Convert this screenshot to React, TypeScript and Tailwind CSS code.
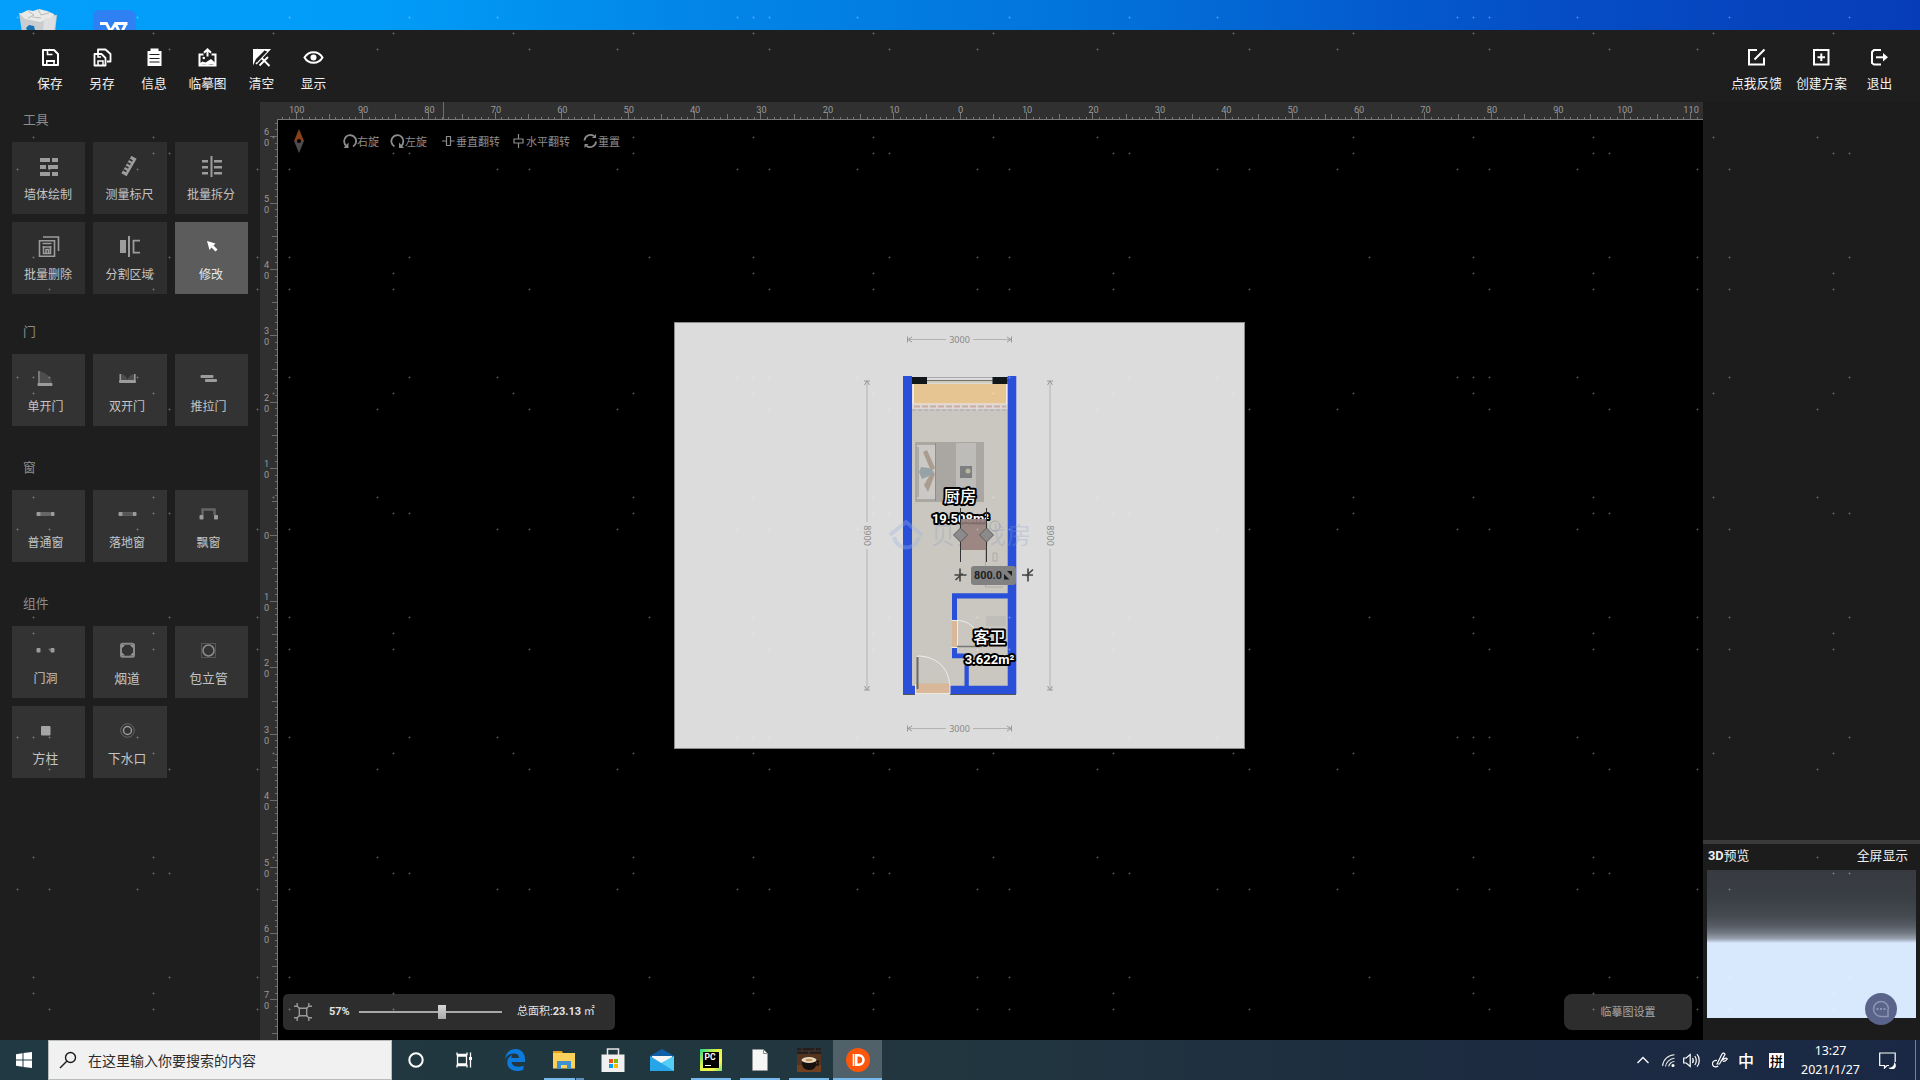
import type { ReactNode } from "react";

const CJK = 'font-["Noto_Sans_CJK_SC","Noto_Sans",sans-serif]';

/* ---------- watermark ---------- */
const DOTS: [number, number][] = [
  [17, 17], [33, 17], [49, 17], [137, 17], [289, 17], [409, 17], [497, 17],
  [33, 33], [153, 33], [273, 33], [393, 33], [513, 33], [633, 33],
  [49, 49], [169, 49], [257, 49], [377, 49], [529, 49], [617, 49],
  [33, 137], [153, 137], [273, 137], [377, 137], [633, 137],
  [153, 153], [169, 153], [393, 153], [409, 153], [633, 153],
  [17, 169], [49, 169], [137, 169], [257, 169], [289, 169], [497, 169], [529, 169], [617, 169],
  [33, 257], [169, 257], [257, 257], [289, 257], [409, 257], [649, 257],
  [33, 273], [153, 273], [393, 273],
  [49, 289], [153, 289], [257, 289], [289, 289], [393, 289], [529, 289],
];

function Watermark() {
  return (
    <svg className="pointer-events-none absolute inset-0" width="1920" height="1040">
      <defs>
        <pattern id="wm" width="720" height="360" patternUnits="userSpaceOnUse">
          {DOTS.map(([x, y]) => (
            <path key={`${x}-${y}`} d={`M${x - 1} ${y + 0.5}h3M${x + 0.5} ${y - 1}v3`} stroke="#fff" strokeOpacity=".16" />
          ))}
        </pattern>
      </defs>
      <rect width="1920" height="1040" fill="url(#wm)" />
    </svg>
  );
}

/* ---------- desktop strip ---------- */
function Desktop() {
  return (
    <div className="flex h-[30px] w-full shrink-0 items-end bg-[linear-gradient(90deg,#039ffb_0%,#019cf7_20%,#0287e8_35%,#0275dc_55%,#054fc6_80%,#073cb8_100%)]">
      <svg width="160" height="30" viewBox="0 0 160 30">
        <path d="M19 13L57 15L55 32H22Z" fill="#c9cdd0" />
        <path d="M20 14l8-4 5 1 6-2 8 2 7 3-1 3-13 5-15-3z" fill="#e9e9e7" />
        <path d="M28 11l6 4-6 3M38 9l3 6 8-2M32 17l9 1" stroke="#b8bbbd" fill="none" />
        <path d="M44 19l12-3-2 16H43z" fill="#dedfe0" />
        <path d="M26 28l3-3 5 1 1 4h-8z" fill="#1673b4" />
        <rect x="93" y="10" width="42.500" height="30" rx="6" fill="#2f80f3" />
        <path d="M100 23.500h6.500l4 8 5-8h12M115.500 24l4 8M126 23.500l-4 8" stroke="#fff" strokeWidth="2.800" fill="none" />
      </svg>
    </div>
  );
}

/* ---------- top toolbar ---------- */
const topIcons: Record<string, ReactNode> = {
  save: (
    <>
      <path d="M2 2h11l4 4v11H2z" fill="none" stroke="#fff" strokeWidth="2" strokeLinejoin="round" />
      <path d="M6.500 2v4.500h5" fill="none" stroke="#fff" strokeWidth="1.600" />
      <path d="M5 12h9v2H5zM5 12h1.500v5H5z" fill="#fff" />
      <path d="M13 12v5" stroke="#fff" strokeWidth="1.600" />
    </>
  ),
  copy: (
    <>
      <path d="M1.500 6h7l4 4v7.500h-11z" fill="none" stroke="#fff" strokeWidth="1.800" strokeLinejoin="round" />
      <path d="M5 5V1.500h7.500L17.500 6v7.500H14" fill="none" stroke="#fff" strokeWidth="1.800" strokeLinejoin="round" />
      <path d="M5 17v-4h5v4M5 6.500v2.500h3" fill="none" stroke="#fff" strokeWidth="1.500" />
    </>
  ),
  info: (
    <>
      <path d="M5.500 .5h8v3h-8zM2.500 3h14v15h-14z" fill="#fff" />
      <path d="M4.500 6.500h10M4.500 10.500h10M4.500 14h10" stroke="#1e1e1e" strokeWidth="1.200" />
    </>
  ),
  trace: (
    <>
      <path d="M5.500 6.500H1.500v11h16v-11h-4" fill="none" stroke="#fff" strokeWidth="2" />
      <path d="M1.500 17.500v-2l3-2 3 1 5.500-3.500 4.500 4v2.500l-4-1.500-4 1-4-.5z" fill="#fff" />
      <circle cx="5.800" cy="10" r="1.300" fill="#fff" />
      <path d="M9.500 8.500V2M6 4.800l3.500-3.500L13 4.800" fill="none" stroke="#fff" strokeWidth="2" />
    </>
  ),
  clear: (
    <>
      <path d="M1 17.500V1h13L4 11z" fill="#fff" />
      <path d="M13 2h4L4 16" fill="none" stroke="#fff" strokeWidth="1.800" />
      <path d="M9.500 10l8 8M16 9l-8.500 8.500" stroke="#fff" strokeWidth="1.900" />
      <path d="M4.500 14L14.500 3.500" stroke="#1e1e1e" strokeWidth="1.100" />
    </>
  ),
  eye: (
    <>
      <path d="M.5 9.500C4.500 2.500 14.500 2.500 18.500 9.500C14.500 16.500 4.500 16.500 .5 9.500z" fill="none" stroke="#fff" strokeWidth="2" />
      <circle cx="9.500" cy="9.500" r="3" fill="#fff" />
    </>
  ),
  feedback: <path d="M10 2H2v14.500h15V9.500M7.500 11.500L17.500 1.500" fill="none" stroke="#fff" strokeWidth="2" />,
  create: <path d="M2 2h14.500v14.500H2zM9.300 5.500v7.500M5.500 9.300h7.500" fill="none" stroke="#fff" strokeWidth="2" />,
  exit: (
    <>
      <path d="M11 2H4L2 4v11l2 1.500h7" fill="none" stroke="#fff" strokeWidth="2" />
      <path d="M6 9.300h8" stroke="#fff" strokeWidth="2" />
      <path d="M13 5l5 4.300-5 4.200z" fill="#fff" />
    </>
  ),
};

function TopItem({ icon, label, width }: { icon: string; label: string; width: number }) {
  return (
    <div className="flex flex-col items-center" style={{ width }}>
      <svg width="19" height="19" viewBox="0 0 19 19" className="overflow-visible">{topIcons[icon]}</svg>
      <span className="mt-[6px] text-[12.700px] leading-[19px] whitespace-nowrap text-[#f2f2f2]">{label}</span>
    </div>
  );
}

function TopBar() {
  return (
    <div className="flex h-[72px] shrink-0 justify-between bg-[#1e1e1e] pt-[18px] pr-[15px] pl-[24px]">
      <div className="flex">
        <TopItem icon="save" label="保存" width={52} />
        <TopItem icon="copy" label="另存" width={52} />
        <TopItem icon="info" label="信息" width={52} />
        <TopItem icon="trace" label="临摹图" width={55} />
        <TopItem icon="clear" label="清空" width={53} />
        <TopItem icon="eye" label="显示" width={51} />
      </div>
      <div className="flex">
        <TopItem icon="feedback" label="点我反馈" width={65} />
        <TopItem icon="create" label="创建方案" width={65} />
        <TopItem icon="exit" label="退出" width={51} />
      </div>
    </div>
  );
}

/* ---------- left palette ---------- */
const G = "#9c9c9c";
const toolIcons: Record<string, ReactNode> = {
  wall: <path d="M3 2h10v4H3zM15 2h6v4h-6zM3 9h6v4H3zM11 9h10v4H11zM3 16h10v4H3zM15 16h6v4h-6z" fill={G} />,
  ruler: (
    <g transform="rotate(30 11 10)">
      <path d="M8 0h6v20H8z" fill={G} />
      <path d="M8 4h3.500M8 8h3.500M8 12h3.500M8 16h3.500" stroke="#2e2e2e" strokeWidth="1.600" />
    </g>
  ),
  split: <path d="M10.500 0h2v21h-2zM2 4h6v2.500H2zM2 10h6v2.500H2zM2 16h6v2.500H2zM14 4h8v2.500h-8zM14 10h8v2.500h-8zM14 16h8v2.500h-8z" fill={G} />,
  del: (
    <g fill="none" stroke={G} strokeWidth="1.600">
      <path d="M6 1h15.500v14M2.500 4.700h15v15.500h-15zM5.500 7.500h9M5.500 11h9M6.500 10v7.500h7V10M9 17v-3.500h2.500V17" />
    </g>
  ),
  area: (
    <>
      <path d="M2 4h6v13H2zM10 0h2v21h-2z" fill={G} />
      <path d="M22 4.700h-6.500v12H22" fill="none" stroke={G} strokeWidth="1.800" />
    </>
  ),
  cursor: <path d="M7 5l8.500 2.500-2 2 4 4-2 2-4-4-2 2.500z" fill="#fff" />,
  door1: (
    <>
      <path d="M4 1C12 2 17 7 18 13H4z" fill="#4d4d4d" />
      <path d="M4 1h2v12H4z" fill="#777" />
      <rect x="3.500" y="13" width="15" height="3" rx="1" fill={G} />
    </>
  ),
  door2: (
    <>
      <path d="M4 4c4 0 7 3 7.500 6C12 7 15 4 19 4v6H4z" fill="#4d4d4d" />
      <path d="M3.500 4h1.600v6H3.500zM18 4h1.600v6H18z" fill={G} />
      <rect x="3" y="10" width="17" height="3" rx="1" fill={G} />
    </>
  ),
  slide: (
    <>
      <rect x="3.500" y="5" width="13" height="3" rx="1" fill={G} />
      <rect x="8" y="9" width="12" height="3" rx="1" fill={G} />
    </>
  ),
  win: (
    <>
      <path d="M6 6h10v4H6z" fill="#666" />
      <rect x="2.500" y="6" width="4" height="4" rx="1" fill={G} />
      <rect x="16.500" y="6" width="4" height="4" rx="1" fill={G} />
    </>
  ),
  floorwin: (
    <>
      <path d="M6 6.500h10M6 9.500h10" stroke="#5c5c5c" />
      <path d="M6 8h10" stroke="#777" />
      <rect x="2.500" y="6" width="4" height="4" rx="1" fill={G} />
      <rect x="16.500" y="6" width="4" height="4" rx="1" fill={G} />
    </>
  ),
  bay: (
    <>
      <path d="M5.500 9V3.500h12V9" fill="none" stroke="#666" strokeWidth="2.500" />
      <rect x="2.500" y="9" width="4" height="4.500" rx="1" fill={G} />
      <rect x="17" y="9" width="4" height="4.500" rx="1" fill={G} />
    </>
  ),
  hole: (
    <>
      <rect x="2.500" y="6" width="4" height="4.500" rx="1" fill={G} />
      <rect x="16.500" y="6" width="4" height="4.500" rx="1" fill={G} />
    </>
  ),
  flue: (
    <>
      <rect x="5" y="1.700" width="13" height="13" rx="1.500" fill="none" stroke="#8a8a8a" strokeWidth="2" />
      <path d="M6 3h3L6 6zM17 3v3l-3-3zM6 13.500v-3l3 3zM17 13.500h-3l3-3z" fill={G} />
    </>
  ),
  pipe: (
    <>
      <rect x="4.500" y="1.500" width="14" height="14" fill="none" stroke="#555" />
      <circle cx="11.500" cy="8.500" r="5.500" fill="none" stroke="#8f8f8f" strokeWidth="1.500" />
    </>
  ),
  column: <rect x="7" y="4" width="9.500" height="9.500" rx="1" fill="#a5a5a5" />,
  drain: (
    <>
      <circle cx="11.500" cy="8.500" r="6.800" fill="none" stroke="#666" />
      <circle cx="11.500" cy="8.500" r="4" fill="none" stroke="#999" strokeWidth="1.500" />
    </>
  ),
};

type Tool = [icon: string, label: string];

function ToolCell({ tool, kind, active }: { tool: Tool; kind: "tool" | "part" | "large"; active?: boolean }) {
  const base = "flex h-[72px] flex-col items-center ";
  const bg = active ? "bg-[#5c5c5c] " : kind === "tool" ? "bg-[#2e2e2e] " : "bg-[#333333] ";
  const pad = kind === "tool" ? "pt-[14px] pr-[1px]" : "pt-[16px] pr-[6px]";
  const text = kind === "large" ? "text-[12.800px]" : "text-[12px]";
  return (
    <div className={base + bg + pad}>
      <svg width="23" height="22" viewBox="0 0 23 22" className="shrink-0">{toolIcons[tool[0]]}</svg>
      <span className={`leading-[18px] whitespace-nowrap ${text} ${active ? "text-[#e8e8e8]" : "text-[#c4c4c4]"} ${kind === "tool" ? "mt-[7px]" : "mt-[5px]"}`}>
        {tool[1]}
      </span>
    </div>
  );
}

function Section({ title, children, gap }: { title: string; children: ReactNode; gap: string }) {
  return (
    <section className={gap}>
      <h2 className="pl-[11px] text-[12.800px] leading-[20px] font-normal text-[#8c8c8c]">{title}</h2>
      <div className="mt-[13px] grid grid-cols-[73px_74px_73px] gap-x-[8px] gap-y-[8px]">{children}</div>
    </section>
  );
}

function Palette() {
  const t: Tool[] = [["wall", "墙体绘制"], ["ruler", "测量标尺"], ["split", "批量拆分"], ["del", "批量删除"], ["area", "分割区域"], ["cursor", "修改"]];
  const d: Tool[] = [["door1", "单开门"], ["door2", "双开门"], ["slide", "推拉门"]];
  const w: Tool[] = [["win", "普通窗"], ["floorwin", "落地窗"], ["bay", "飘窗"]];
  const c: Tool[] = [["hole", "门洞"], ["flue", "烟道"], ["pipe", "包立管"], ["column", "方柱"], ["drain", "下水口"]];
  return (
    <aside className="w-[260px] shrink-0 bg-[#1e1e1e] pt-[7px] pl-[12px]">
      <Section title="工具" gap="">
        {t.map((x) => <ToolCell key={x[1]} tool={x} kind="tool" active={x[0] === "cursor"} />)}
      </Section>
      <Section title="门" gap="mt-[27px]">
        {d.map((x) => <ToolCell key={x[1]} tool={x} kind="part" />)}
      </Section>
      <Section title="窗" gap="mt-[31px]">
        {w.map((x) => <ToolCell key={x[1]} tool={x} kind="part" />)}
      </Section>
      <Section title="组件" gap="mt-[31px]">
        {c.map((x) => <ToolCell key={x[1]} tool={x} kind={x[0] === "hole" ? "part" : "large"} />)}
      </Section>
    </aside>
  );
}

/* ---------- rulers ---------- */
const UNIT = 6.64;

function TopRuler() {
  const ticks: ReactNode[] = [];
  for (let i = -102; i <= 111; i++) {
    const x = Math.round(700.5 + i * UNIT) - 0.5;
    const len = i % 10 === 0 ? 7 : i % 5 === 0 ? 5 : 2;
    ticks.push(<path key={i} d={`M${x} ${17 - len}V17`} stroke="#747474" />);
    if (i % 10 === 0)
      ticks.push(
        <text key={`t${i}`} x={700.7 + i * UNIT} y="11" textAnchor="middle" fontSize="9.200" fill="#9a9a9a" className="font-[Roboto]">
          {Math.abs(i)}
        </text>,
      );
  }
  return (
    <svg width="1443" height="18" className="block shrink-0 bg-[#303030]">
      {ticks}
      <path d="M17 17.500H1443" stroke="#777" />
      <path d="M183.500 0V18" stroke="#1687e0" />
    </svg>
  );
}

function LeftRuler() {
  const ticks: ReactNode[] = [];
  for (let i = -62; i <= 75; i++) {
    const y = Math.round(415.5 + i * UNIT) - 0.5;
    const len = i % 10 === 0 ? 7 : i % 5 === 0 ? 5 : 2;
    ticks.push(<path key={i} d={`M${17 - len} ${y}H17`} stroke="#6c6c6c" />);
    if (i % 10 === 0) {
      const chars = String(Math.abs(i)).split("");
      chars.forEach((ch, k) =>
        ticks.push(
          <text key={`t${i}${k}`} x="6.500" y={chars.length === 1 ? y + 3.5 : y - 2 + k * 11} textAnchor="middle" fontSize="9.200" fill="#9a9a9a" className="font-[Roboto]">
            {ch}
          </text>,
        ),
      );
    }
  }
  return (
    <svg width="18" height="920" className="block shrink-0 bg-[#303030]">
      {ticks}
      <path d="M17.500 0V920" stroke="#777" />
    </svg>
  );
}

/* ---------- floor plan ---------- */
function HDim({ y }: { y: number }) {
  return (
    <g stroke="#b2b2b2" fill="none">
      <path d={`M908 ${y}h38M973 ${y}h38`} />
      <path d={`M912 ${y - 2.5}l-4 2.500 4 2.500M907.500 ${y - 3}v6M1007 ${y - 2.5}l4 2.500-4 2.500M1011.500 ${y - 3}v6`} stroke="#999" />
      <text x="959.500" y={y + 3} textAnchor="middle" fontSize="9" stroke="none" fill="#888" className='font-["Noto_Sans"]'>3000</text>
    </g>
  );
}

function VDim({ x }: { x: number }) {
  return (
    <g stroke="#b2b2b2" fill="none">
      <path d={`M${x} 381v141M${x} 549v141`} />
      <path d={`M${x - 2.5} 385l2.500-4 2.500 4M${x - 3} 381h6M${x - 2.5} 686l2.500 4 2.500-4M${x - 3} 690h6`} stroke="#999" />
      <text transform={`translate(${x - 3} 535.500) rotate(90)`} textAnchor="middle" fontSize="9" stroke="none" fill="#888" className='font-["Noto_Sans"]'>8900</text>
    </g>
  );
}

function FloorPlan() {
  const B = "#2a50da";
  const label = { stroke: "#000", strokeWidth: 4, strokeLinejoin: "round" as const, paintOrder: "stroke", fill: "#fff" };
  return (
    <svg width="571" height="427" viewBox="674 322 571 427" className="absolute top-[202px] left-[396px]">
      <rect x="674" y="322" width="571" height="427" fill="#dcdcdc" />
      <rect x="674.500" y="322.500" width="570" height="426" fill="none" stroke="#8b8b8b" />
      <HDim y={339.5} />
      <HDim y={728.5} />
      <VDim x={867} />
      <VDim x={1050} />

      <rect x="907" y="380" width="105" height="310" fill="#c9c7bf" />
      {/* balcony */}
      <rect x="912" y="383" width="96" height="26" fill="#dcd8d8" />
      <rect x="912.500" y="384" width="95" height="20" fill="#f0ebe6" />
      <rect x="914" y="384" width="92" height="19.500" fill="#e6c592" />
      <path d="M914 406.500H1006" stroke="#cbab9f" strokeWidth="2" strokeDasharray="6 2" />
      <path d="M912 410H1008" stroke="#a9a7b0" strokeDasharray="4 2" />
      <path d="M911 377.500H1008" stroke="#aaa" />
      <path d="M911 380.500H1008" stroke="#6f7264" />
      <path d="M911 382.500H1008" stroke="#d2cdb5" />
      {/* bed */}
      <rect x="915" y="442" width="69" height="60" fill="#aaa7a3" />
      <rect x="917" y="445" width="19" height="54" fill="#cbc9c5" />
      <rect x="956" y="443" width="20" height="58" fill="#bebcb8" />
      <path d="M923 452l4-2 8 18-4 3zM924 485l8-14 3 3-7 18z" fill="#aa9d90" />
      <path d="M921 467l8 1 5 4-5 4-7 3-3-7z" fill="#96a2a6" />
      <path d="M918 447v50M935.500 443v58" stroke="#908d8a" />
      <rect x="960" y="466" width="12" height="12" fill="#7d7e80" />
      <circle cx="968" cy="471" r="2.500" fill="#b9b89a" />
      {/* fixtures */}
      <path d="M985.500 545v42M985 587h18M993 553h4v8h-4z" stroke="#aeaba6" fill="none" />
      <circle cx="995" cy="526" r="5" fill="none" stroke="#aaa9a7" />
      <rect x="986" y="616" width="20" height="10" fill="#bfbebb" />

      {/* walls */}
      <g fill={B}>
        <path d="M903 376h9v318h-9zM1007.700 376h8.600v318h-8.600zM903 685.700h12v8.300h-12zM950 685.700h66v8.300h-66z" />
        <path d="M952 593.300h56v5.200h-56zM952 593.300h5v28h-5zM952 648h5v10h-5zM952 653.500h17v4.700h-17zM964.500 658h4.300v28h-4.300z" />
      </g>
      <path d="M903 694.500H915M950 694.500H1016" stroke="#555" />
      <path d="M912 377h15v7h-15zM992.500 377h15v7h-15z" fill="#111619" />

      {/* doors */}
      <rect x="915.500" y="683.500" width="34.500" height="10" fill="#d9b799" />
      <path d="M915.500 693.500H950M915.500 684v10M950 684v10" stroke="#ede8e2" />
      <path d="M917.500 689V656C936 656 948.500 668 949.500 684" fill="none" stroke="#eee" />
      <path d="M917.500 657V689" stroke="#6b6966" strokeWidth="2" />
      <rect x="952" y="620.500" width="5.500" height="27" fill="#d9b799" />
      <path d="M951.500 620.500h6v27h-6" fill="none" stroke="#eee" />
      <path d="M957.500 620.500C970 620.500 980 631 981.500 646" fill="none" stroke="#eee" />
      <path d="M957 646.500h25" stroke="#777" strokeWidth="1.500" />

      {/* agency mark */}
      <g opacity=".35" stroke="#9fb4e2" fill="none" strokeWidth="4">
        <path d="M890 535l16-13 16 13M894 537c3 14 21 14 25 0" />
      </g>
      <text x="931" y="544" fontSize="24" fill="#8a9cc8" fillOpacity=".3" textLength="100" className={CJK}>贝壳找房</text>

      {/* room labels */}
      <text x="960" y="501.500" textAnchor="middle" fontSize="16.300" fontWeight="500" {...label} className={CJK}>厨房</text>
      <text x="960.500" y="522.700" textAnchor="middle" fontSize="13" fontWeight="700" {...label} className="font-[Roboto]">19.508m²</text>
      <text x="989.500" y="642.500" textAnchor="middle" fontSize="16.300" fontWeight="500" {...label} className={CJK}>客卫</text>
      <text x="989.500" y="664" textAnchor="middle" fontSize="13" fontWeight="700" {...label} className="font-[Roboto]">3.622m²</text>

      {/* selected object */}
      <rect x="960.500" y="519" width="26" height="31" fill="#9a8380" fillOpacity=".94" />
      <path d="M960.500 508v54M986.500 508v54" stroke="#333" />
      <path d="M960.500 523H986.500" stroke="#6d6462" />
      <path d="M953.500 535l7-7 7 7-7 7zM979.500 535l7-7 7 7-7 7z" fill="#8b8b8b" stroke="#5d5d5d" />
      <rect x="971" y="566" width="45" height="19" rx="3" fill="#818181" />
      <text x="974" y="579" fontSize="10.800" fontWeight="700" fill="#202020" className="font-[Roboto]">800.0</text>
      <path d="M1004 574v5.500h5.500zM1007 571h5v5z" fill="#1c1c1c" />
      <path d="M954.500 575h12M960 568.500v13M955.500 580l7-6.500" stroke="#444" strokeWidth="1.600" />
      <path d="M1022 575h11M1028 568.500v13M1026 576l7-6.500" stroke="#444" strokeWidth="1.600" />
    </svg>
  );
}

/* ---------- canvas area ---------- */
function FlipItem({ label, children, className }: { label: string; children: ReactNode; className: string }) {
  return (
    <div className={`flex items-center ${className}`}>
      <svg width="15" height="16" viewBox="0 0 15 16" fill="none" stroke="#8c8c8c" strokeWidth="1.800">{children}</svg>
      <span className="text-[11px] leading-4 whitespace-nowrap text-[#8c8c8c]">{label}</span>
    </div>
  );
}

function Canvas() {
  return (
    <div className="relative flex h-[920px] w-[1425px] flex-col justify-between overflow-hidden bg-black">
      <FloorPlan />
      <div className="flex h-[42px] items-center pl-[16px]">
        <svg width="10" height="24" viewBox="0 0 10 24">
          <path d="M5 0l5 12H0z" fill="#87401a" />
          <path d="M5 24l5-12H0z" fill="#4c4c4c" />
          <circle cx="5" cy="12" r="2" fill="#000" />
        </svg>
        <FlipItem label="右旋" className="ml-[38px]">
          <path d="M4.500 13A6 6 0 1 1 11 13.500" />
          <path d="M1.500 15h5V9.500z" fill="#8c8c8c" stroke="none" />
        </FlipItem>
        <FlipItem label="左旋" className="ml-[11px]">
          <path d="M4.500 13.500A6 6 0 1 1 11 13" />
          <path d="M14 15H9V9.500z" fill="#8c8c8c" stroke="none" />
        </FlipItem>
        <FlipItem label="垂直翻转" className="ml-[14px]">
          <path d="M5.500 3.500h4v9h-4zM1 8h4.500M9.500 8h4" strokeWidth="1.200" />
        </FlipItem>
        <FlipItem label="水平翻转" className="ml-[11px]">
          <path d="M3 6h9v4H3zM7.500 1v5M7.500 10v5" strokeWidth="1.200" />
        </FlipItem>
        <FlipItem label="重置" className="ml-[13px]">
          <path d="M1.500 7.500A6 6 0 0 1 11 3M13 8.500A6 6 0 0 1 3.500 13" />
          <path d="M9 5h4V1zM1.500 15v-4h4z" fill="#8c8c8c" stroke="none" />
        </FlipItem>
      </div>
      <div className="flex justify-between pr-[11px] pb-[10px] pl-[5px]">
        <div className="flex h-[36px] w-[332px] items-center rounded-[5px] bg-[#2d2d2d] pl-[11px] text-[11px] text-[#e2e2e2]">
          <svg width="18" height="18" viewBox="0 0 18 18" fill="none" stroke="#999" strokeWidth="1.400">
            <path d="M5.300 5.300h7.400v7.400H5.300z" />
            <path d="M0 3.200h2.500L3.200 2.500V0M18 3.200h-2.500l-.7-.7V0M0 14.800h2.500l.7.700V18M18 14.800h-2.500l-.7.700V18M2.500 2.500l3 3M15.500 2.500l-3 3M2.500 15.500l3-3M15.500 15.500l-3-3" />
          </svg>
          <span className='ml-[17px] w-[30px] font-["Roboto"] font-bold'>57%</span>
          <div className="flex h-[14px] w-[143px] items-center">
            <div className="h-[2px] w-[79px] bg-[#a8a8a8]" />
            <div className="h-[14px] w-[8px] bg-[linear-gradient(#d8d8d8,#a9a9a9)]" />
            <div className="h-[2px] flex-1 bg-[#a8a8a8]" />
          </div>
          <span className='ml-[15px] font-["Roboto","Noto_Sans_CJK_SC",sans-serif] whitespace-nowrap'>
            总面积:<b>23.13</b> ㎡
          </span>
        </div>
        <button className="flex h-[36px] w-[128px] items-center justify-center rounded-[8px] bg-[#2d2d2d] pb-px text-[11px] text-[#a8a8a8]">
          临摹图设置
        </button>
      </div>
    </div>
  );
}

/* ---------- right panel ---------- */
function RightPanel() {
  return (
    <aside className="flex w-[217px] flex-col bg-[#1c1c1c]">
      <div className="h-[738px]" />
      <div className="h-[4px] bg-[#3a3a3a]" />
      <div className='flex h-[26px] items-center justify-between pr-[12px] pb-[3px] pl-[5px] font-["Roboto","Noto_Sans_CJK_SC",sans-serif] text-[12.800px] text-[#efefef]'>
        <span><b>3D</b>预览</span>
        <span>全屏显示</span>
      </div>
      <div className="relative ml-[4px] h-[148px] w-[209px] bg-[linear-gradient(#373b40_0px,#3a3e45_28px,#454a51_46px,#575c65_56px,#727983_63px,#9aa3b1_69px,#d8e8fd_73px,#d8e8fd_100%)]">
        <div className="absolute top-[123px] left-[158px] flex h-8 w-8 items-center justify-center rounded-full bg-[#5a6389]">
          <svg width="18" height="18" viewBox="0 0 18 18" fill="none" stroke="#8d95b5" strokeWidth="1.500">
            <path d="M16.500 9a7.500 7.500 0 1 0-7.500 7.500h7V9" />
            <path d="M4.500 9h2M8 9h2M11.500 9h2" strokeWidth="2" />
          </svg>
        </div>
      </div>
    </aside>
  );
}

/* ---------- taskbar ---------- */
function TaskButton({ children, line, active }: { children: ReactNode; line?: string; active?: boolean }) {
  return (
    <div className={`flex h-[40px] w-[49px] flex-col items-center ${active ? "bg-[#51616a]" : ""}`}>
      <div className="flex h-[38px] items-center pt-[2px]">{children}</div>
      {line && <div className={`h-[2px] bg-[#76b9ed] ${line}`} />}
    </div>
  );
}

function Taskbar() {
  return (
    <footer className="flex h-[40px] shrink-0 items-center justify-between bg-[linear-gradient(90deg,#213942_0%,#21363f_50%,#1d2c40_75%,#1a2845_100%)]">
      <div className="flex h-full">
        <div className="flex w-[48px] items-center justify-center">
          <svg width="16" height="16" viewBox="0 0 16 16" fill="#fff">
            <path d="M0 2.200L6.500 1.300V7.500H0zM7.500 1.100L16 0V7.500H7.500zM0 8.500h6.500v6.200L0 13.800zM7.500 8.500H16V16l-8.500-1.100z" />
          </svg>
        </div>
        <div className="flex h-full w-[344px] items-center border border-[#b9bcbd] bg-[#f1f1f1] pl-[10px] text-[14px] text-[#2c2c2c]">
          <svg width="18" height="18" viewBox="0 0 18 18" fill="none" stroke="#1c1c1c" strokeWidth="1.400">
            <circle cx="11.500" cy="6.500" r="5" />
            <path d="M8 10L1 17" />
          </svg>
          <span className="ml-[11px]">在这里输入你要搜索的内容</span>
        </div>
        <TaskButton>
          <svg width="18" height="16" viewBox="0 0 18 16"><circle cx="8" cy="8" r="6.700" fill="none" stroke="#fff" strokeWidth="2" /></svg>
        </TaskButton>
        <TaskButton>
          <svg width="20" height="16" viewBox="0 0 20 16" fill="none" stroke="#fff" strokeWidth="1.300">
            <path d="M1.500 4h9v8h-9zM1 .5v2h10v-2M1 15.500v-2h10v2M14.500 .5v15" />
            <path d="M13 5h3v3h-3z" fill="#fff" stroke="none" />
          </svg>
        </TaskButton>
        <TaskButton>
          <svg width="20" height="22" viewBox="0 0 20 22">
            <path d="M0 10C1 3.500 5.500 0 10.500 0C16.500 0 20 4.500 20 10v3H6.500c.3 3 3 4.700 6.500 4.700 2.200 0 4-.5 5.500-1.300v4c-1.800 1-4 1.500-6.500 1.500C6 22 2.300 18.500 2.300 13.500 2.300 10 4 7.500 7 6 6.500 7 6.400 8 6.400 9H14c0-3-1.800-4.500-5-4.500C5 4.500 2 6.500 0 10z" fill="#0d7bdb" />
          </svg>
        </TaskButton>
        <div className="flex h-[40px] w-[49px] flex-col">
          <div className="flex h-[38px] items-center pt-[1px] pl-[14px]">
            <svg width="22" height="18" viewBox="0 0 22 18">
              <path d="M0 0h9l1 2H0z" fill="#e5a01c" />
              <path d="M0 2h22v15.500H0z" fill="#fcd15b" />
              <path d="M4 18V10h14v8h-4v-4H8v4z" fill="#3d91d3" />
            </svg>
          </div>
          <div className="ml-[5px] flex h-[2px] w-[40px] gap-px"><i className="w-[31px] bg-[#76b9ed]" /><i className="flex-1 bg-[#5a8fbb]" /></div>
        </div>
        <TaskButton>
          <svg width="24" height="24" viewBox="0 0 24 24">
            <path d="M6.500 7V1h11v6" fill="none" stroke="#e6e6e6" strokeWidth="1.500" />
            <path d="M.5 6.500h23V24H.5z" fill="#f0f0f0" />
            <path d="M8 11h4v4H8z" fill="#f25022" /><path d="M13 11h4v4h-4z" fill="#7fba00" />
            <path d="M8 16h4v4H8z" fill="#00a4ef" /><path d="M13 16h4v4h-4z" fill="#ffb900" />
          </svg>
        </TaskButton>
        <TaskButton>
          <svg width="24" height="22" viewBox="0 0 24 22">
            <path d="M0 7l12-7 12 7v3H0z" fill="#0f5ea8" />
            <path d="M2 7h20v7H2z" fill="#f4f4f4" />
            <path d="M0 7l12 7.500L24 7v15H0z" fill="#27a5e8" />
            <path d="M24 7L11 14l13 8z" fill="#53cdf5" />
          </svg>
        </TaskButton>
        <TaskButton line="w-[40px]">
          <svg width="22" height="22" viewBox="0 0 22 22">
            <defs><linearGradient id="pc" x1="0" y1="0" x2="1" y2="1"><stop offset="0" stopColor="#21d789" /><stop offset=".4" stopColor="#d9f04c" /><stop offset=".75" stopColor="#fcf84a" /><stop offset="1" stopColor="#6fe07c" /></linearGradient></defs>
            <rect width="22" height="22" fill="url(#pc)" />
            <rect x="3" y="3" width="16" height="16" fill="#000" />
            <text x="4.500" y="11" fontSize="8.500" fontWeight="700" fill="#fff" className="font-[Roboto]">PC</text>
            <path d="M5 16.500h6" stroke="#fff" />
          </svg>
        </TaskButton>
        <TaskButton line="w-[40px]">
          <svg width="16" height="22" viewBox="0 0 16 22"><path d="M.5 .5h11l4 4v17H.5z" fill="#f7f7f7" stroke="#999" strokeWidth=".6" /><path d="M11.500 .5v4h4" fill="none" stroke="#888" /></svg>
        </TaskButton>
        <TaskButton line="w-[40px]">
          <svg width="24" height="24" viewBox="0 0 24 24">
            <rect width="24" height="24" fill="#54341f" />
            <path d="M0 0h24v6H0z" fill="#241e1c" />
            <path d="M0 3h24M5 0v3M12 3v3M18 0v3" stroke="#54433b" strokeWidth=".8" />
            <path d="M0 17h24v7H0z" fill="#70401f" />
            <path d="M5 12h14v4c0 4-3 6-7 6S5 19 5 16z" fill="#17110e" />
            <path d="M18 13h3v4h-4" fill="none" stroke="#17110e" strokeWidth="1.500" />
            <ellipse cx="12" cy="12" rx="7.500" ry="3" fill="#ead9bd" />
            <ellipse cx="12" cy="12" rx="3.500" ry="1.300" fill="#c49a6b" />
          </svg>
        </TaskButton>
        <TaskButton line="w-[49px]" active>
          <svg width="24" height="24" viewBox="0 0 24 24">
            <circle cx="12" cy="12" r="12" fill="#fc560b" />
            <path d="M10.200 7.200h2.500a4.800 4.800 0 0 1 0 9.600h-2.500z" fill="none" stroke="#fff" strokeWidth="2.600" />
            <path d="M7.500 6v12" stroke="#fff" strokeWidth="1.600" />
          </svg>
        </TaskButton>
      </div>

      <div className="flex h-full items-center text-white">
        <svg width="12" height="8" viewBox="0 0 12 8" fill="none" stroke="#fff" strokeWidth="1.300"><path d="M.5 7L6 1.500 11.500 7" /></svg>
        <svg className="ml-[13px]" width="13" height="13" viewBox="0 0 13 13" fill="none" stroke="#e8e8e8" strokeWidth="1.100">
          <path d="M.6 12C1 6 6 1 12.500 .8M3.500 12.500C4 8 8 4.500 12.500 4.300M6.700 12.500c.3-2.600 3-5 5.800-5" />
          <circle cx="11" cy="11.500" r="1.500" fill="#fff" stroke="none" />
        </svg>
        <svg className="ml-[8px]" width="17" height="15" viewBox="0 0 17 15" fill="none" stroke="#fff" strokeWidth="1.200">
          <path d="M.7 5v5h2.500l4 3.500V1.500L3.200 5zM9.500 5c1 1.500 1 3.500 0 5M11.800 3c2 2.500 2 6.500 0 9M14 1.200c3 3.500 3 9 0 12.500" />
        </svg>
        <svg className="ml-[12px]" width="16" height="16" viewBox="0 0 16 16" fill="none" stroke="#fff" strokeWidth="1.200">
          <path d="M5 12L10 2c1-1.500 3-1 3 .5L7.500 12zM5 8.500C1 8 0 11 .7 13c.8 2.500 4 2 5.500 1M9 9c2-2 5-3.500 6-2.500S12 10 11 9" />
        </svg>
        <span className="ml-[10px] w-[16px] pb-px text-[16px] leading-[20px] font-medium">中</span>
        <span className="ml-[15px] flex h-[15px] w-[15px] items-center justify-center bg-white text-[13px] leading-[15px] font-medium text-black">拼</span>
        <div className='ml-[9px] flex w-[74px] flex-col items-center pl-px font-["Noto_Sans"] text-[12.400px] leading-[19px]'>
          <span>13:27</span>
          <span>2021/1/27</span>
        </div>
        <svg className="ml-[12px]" width="17" height="17" viewBox="0 0 17 17" fill="none" stroke="#fff" strokeWidth="1.200">
          <path d="M10 13.500H8L5.500 16V13.500H.7V1h15.500v9" />
          <path d="M15 10a4 4 0 1 1-5.500 5.500A4.500 4.500 0 0 0 15 10z" fill="#fff" stroke="none" />
        </svg>
        <div className="mr-[4px] ml-[19px] h-full w-px bg-[#78818f]" />
      </div>
    </footer>
  );
}

export default function App() {
  return (
    <div className={`relative flex h-[1080px] w-[1920px] flex-col overflow-hidden bg-black ${CJK}`}>
      <Desktop />
      <TopBar />
      <main className="flex h-[938px]">
        <Palette />
        <div className="w-[1443px] shrink-0">
          <TopRuler />
          <div className="flex">
            <LeftRuler />
            <Canvas />
          </div>
        </div>
        <RightPanel />
      </main>
      <Taskbar />
      <Watermark />
    </div>
  );
}
